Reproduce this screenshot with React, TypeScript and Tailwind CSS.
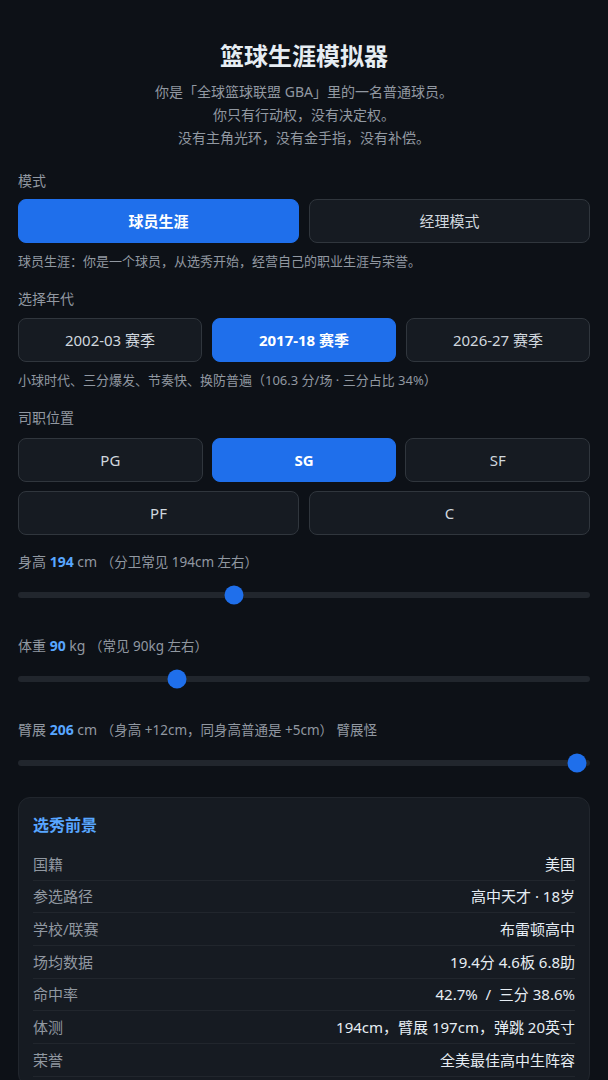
import React, { useState } from 'react'

const FONT = 'font-["Noto_Sans","Noto_Sans_CJK_SC",sans-serif]'

const eras = ['2002-03 赛季', '2017-18 赛季', '2026-27 赛季']
const positions = ['PG', 'SG', 'SF', 'PF', 'C']

const draftRows: [string, string][] = [
    ['国籍', '美国'],
    ['参选路径', '高中天才 · 18岁'],
    ['学校/联赛', '布雷顿高中'],
    ['场均数据', '19.4分 4.6板 6.8助'],
    ['命中率', '42.7%  /  三分 38.6%'],
    ['体测', '194cm，臂展 197cm，弹跳 20英寸'],
    ['荣誉', '全美最佳高中生阵容'],
]

const Choice = ({ label, active, onClick }: { label: string; active: boolean; onClick: () => void }) => (
    <button
        onClick={onClick}
        className={`h-[44px] rounded-lg text-[15px] border ${active ? 'bg-[#1f6feb] border-[#1f6feb] text-white font-bold' : 'bg-[#161b22] border-[#30363d] text-[#d0d7de]'}`}
    >
        {label}
    </button>
)

const Slider = ({ pct }: { pct: number }) => (
    <div className='h-[18px] flex items-center'>
        <div className='relative w-full h-[6px] rounded-full bg-[#21262d]'>
            <div className='absolute inset-y-0 left-[9px] right-[9px]'>
                <div
                    className='absolute top-1/2 w-[19px] h-[19px] -translate-x-1/2 -translate-y-1/2 rounded-full bg-[#1f6feb]'
                    style={{ left: `${pct}%` }}
                />
            </div>
        </div>
    </div>
)

const App = () => {
    const [mode, setMode] = useState(0)
    const [era, setEra] = useState(1)
    const [pos, setPos] = useState(1)

    return (
        <div className={`min-h-screen bg-[#0d1117] text-[#e6edf3] ${FONT} px-[18px] pt-[40px] pb-10`}>
            <h1 className='text-[24px] font-bold text-center leading-[32px]'>篮球生涯模拟器</h1>
            <div className='mt-[8px] text-center text-[14px] leading-[23px] text-[#9198a1]'>
                <p>你是「全球篮球联盟 GBA」里的一名普通球员。</p>
                <p>你只有行动权，没有决定权。</p>
                <p>没有主角光环，没有金手指，没有补偿。</p>
            </div>

            <div className='mt-[22px] text-[14px] text-[#9198a1] leading-[20px]'>模式</div>
            <div className='mt-[8px] grid grid-cols-2 gap-[10px]'>
                <Choice label='球员生涯' active={mode === 0} onClick={() => setMode(0)} />
                <Choice label='经理模式' active={mode === 1} onClick={() => setMode(1)} />
            </div>
            <p className='mt-[8px] text-[13px] leading-[20px] text-[#9198a1]'>球员生涯：你是一个球员，从选秀开始，经营自己的职业生涯与荣誉。</p>

            <div className='mt-[18px] text-[14px] text-[#9198a1] leading-[20px]'>选择年代</div>
            <div className='mt-[9px] grid grid-cols-3 gap-[10px]'>
                {eras.map((e, i) => (
                    <Choice key={e} label={e} active={era === i} onClick={() => setEra(i)} />
                ))}
            </div>
            <p className='mt-[8px] text-[13px] leading-[20px] text-[#9198a1]'>小球时代、三分爆发、节奏快、换防普遍（106.3 分/场 · 三分占比 34%）</p>

            <div className='mt-[18px] text-[14px] text-[#9198a1] leading-[20px]'>司职位置</div>
            <div className='mt-[10px] grid grid-cols-3 gap-[9px]'>
                {positions.slice(0, 3).map((p, i) => (
                    <Choice key={p} label={p} active={pos === i} onClick={() => setPos(i)} />
                ))}
            </div>
            <div className='mt-[9px] grid grid-cols-2 gap-[10px]'>
                {positions.slice(3).map((p, i) => (
                    <Choice key={p} label={p} active={pos === i + 3} onClick={() => setPos(i + 3)} />
                ))}
            </div>

            <div className='mt-[17px] text-[14px] leading-[20px] text-[#9198a1]'>
                身高 <b className='text-[#58a6ff]'>194</b> cm <span className='text-[13.5px]'>（分卫常见 194cm 左右）</span>
            </div>
            <div className='mt-[14px]'><Slider pct={37.4} /></div>

            <div className='mt-[32px] text-[14px] leading-[20px] text-[#9198a1]'>
                体重 <b className='text-[#58a6ff]'>90</b> kg <span className='text-[13.5px]'>（常见 90kg 左右）</span>
            </div>
            <div className='mt-[14px]'><Slider pct={27.1} /></div>

            <div className='mt-[32px] text-[14px] leading-[20px] text-[#9198a1]'>
                臂展 <b className='text-[#58a6ff]'>206</b> cm <span className='text-[13.5px]'>（身高 +12cm，同身高普通是 +5cm） 臂展怪</span>
            </div>
            <div className='mt-[14px]'><Slider pct={99.3} /></div>

            <div className='mt-[25px] rounded-xl bg-[#161b22] border border-[#21262d] px-[14px] pt-[15px] pb-2'>
                <div className='text-[16px] font-bold text-[#58a6ff] leading-[24px]'>选秀前景</div>
                <div className='mt-[11px]'>
                    {draftRows.map(([k, v]) => (
                        <div key={k} className='flex justify-between items-center h-[32.7px] border-b border-[#21262d] text-[15px]'>
                            <span className='text-[#9198a1]'>{k}</span>
                            <span className='text-[#e6edf3] whitespace-pre'>{v}</span>
                        </div>
                    ))}
                </div>
            </div>
        </div>
    )
}

export default App
